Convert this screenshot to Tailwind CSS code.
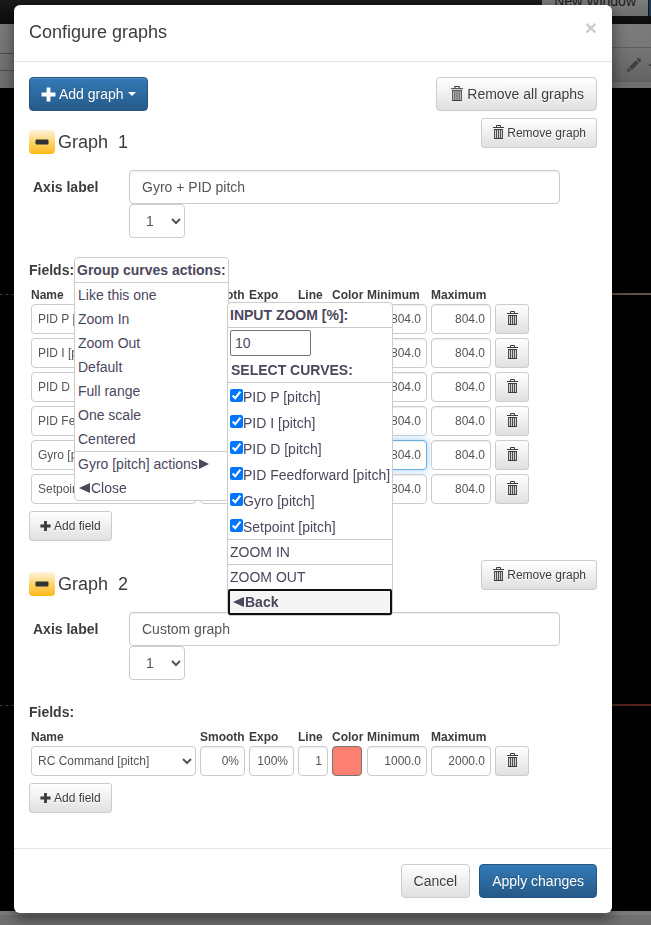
<!DOCTYPE html>
<html lang="en">
<head>
<meta charset="utf-8">
<meta name="viewport" content="width=device-width, initial-scale=1">
<title>Configure graphs</title>
<script src="https://cdn.jsdelivr.net/npm/@tailwindcss/browser@4"></script>
</head>
<body class="min-h-screen bg-black font-['Liberation_Sans',Arial,sans-serif] text-sm leading-5 text-[#3c3c3c]">

<svg class="hidden" aria-hidden="true">
  <symbol id="trash" viewBox="0 0 11 14">
    <path d="M3.500 2V.5h4V2" fill="none" stroke="currentColor" stroke-width="1"/>
    <path d="M0 2h11v1H0z" fill="currentColor"/>
    <path d="M1 4h9v9H1z" fill="currentColor" fill-opacity=".15"/>
    <path d="M1.500 4v9M3.500 5v8M5.500 5v8M7.500 5v8M9.500 4v9" stroke="currentColor" stroke-width=".9"/>
    <path d="M1 13.500h9M1 4.500h9" stroke="currentColor" stroke-width="1"/>
  </symbol>
  <symbol id="plus" viewBox="0 0 14 14">
    <path d="M5.200 .5h3.600v4.700H13.500v3.600H8.800V13.500H5.200V8.800H.5V5.200h4.700z" fill="currentColor"/>
  </symbol>
  <symbol id="minus" viewBox="0 0 14 6">
    <path d="M1.500 .5h11a1 1 0 0 1 1 1v3a1 1 0 0 1-1 1h-11a1 1 0 0 1-1-1v-3a1 1 0 0 1 1-1z" fill="currentColor"/>
  </symbol>
</svg>

<!-- Dimmed application behind the dialog -->
<div class="fixed inset-0 flex flex-col overflow-hidden bg-black" aria-hidden="true">
  <div class="flex h-6 items-start justify-end gap-px bg-gradient-to-b from-[#1b1b1b] to-[#0c0c0c]">
    <div class="flex h-4 items-start bg-gradient-to-b from-[#7c7c7c] to-[#6e6e6e] px-3 text-sm leading-[2px] text-[#1a1a1a]">New Window</div>
    <div class="h-4 w-[2px] bg-[#163a58]"></div>
  </div>
  <div class="flex h-16 justify-between bg-gradient-to-b from-[#7c7c7c] to-[#6e6e6e]">
    <div class="flex w-[14px] flex-col pt-[29px]">
      <div class="h-[18px] border-y border-[#4f4f4f]"></div>
    </div>
    <div class="flex w-[39px] flex-col pt-[23px]">
      <div class="flex h-[35px] items-center justify-between border-y border-[#5c5c5c] bg-gradient-to-b from-[#757575] to-[#636363] pl-[14px]">
        <svg class="h-4 w-4 text-[#404040]" viewBox="0 0 16 16"><path d="M1 15l1.200-4.200 3 3zM3 10l6.800-6.800 3 3L6 13zM10.600 2.400l1.200-1.200a1 1 0 0 1 1.400 0l1.600 1.600a1 1 0 0 1 0 1.400l-1.200 1.200z" fill="currentColor"/></svg>
        <div class="h-[2px] w-[2px] bg-[#444]"></div>
      </div>
    </div>
  </div>
  <div class="flex flex-1 flex-col">
    <div class="flex h-[207px] items-end justify-between">
      <div class="w-[14px] border-t border-dashed border-[#3a3a3a]"></div>
      <div class="w-[39px] border-t-2 border-[#5d523d]"></div>
    </div>
    <div class="flex h-[411px] items-end justify-between">
      <div class="w-[14px] border-t border-dashed border-[#3a3a3a]"></div>
      <div class="w-[39px] border-t-2 border-[#552420]"></div>
    </div>
  </div>
  <div class="h-[14px] border-t-4 border-[#7c7c7c] bg-[#707070]"></div>
</div>

<div role="dialog" aria-labelledby="title" class="relative mt-[5px] mr-[39px] ml-[14px] rounded-md bg-white shadow-[0_5px_15px_rgba(0,0,0,0.5)]">
  <header class="flex items-start justify-between border-b border-[#e5e5e5] px-[15px] pt-[14px] pb-4">
    <h4 id="title" class="text-lg leading-[26px]">Configure graphs</h4>
    <button type="button" aria-label="Close" class="text-[21px] leading-[18px] font-bold text-[#ccc]">×</button>
  </header>

  <main class="px-[15px] pt-[15px] pb-[35px]">
    <div class="flex justify-between">
      <button type="button" class="flex h-[34px] items-center rounded border border-[#245580] bg-gradient-to-b from-[#337ab7] to-[#265a88] px-[11px] text-white shadow-[inset_0_1px_0_rgba(255,255,255,0.15)] text-shadow-[0_-1px_0_rgba(0,0,0,0.2)]">
        <svg class="mr-[3px] h-[15px] w-[15px]"><use href="#plus"/></svg>Add graph
        <span class="ml-1 border-x-4 border-t-4 border-x-transparent border-t-white"></span>
      </button>
      <button type="button" class="flex h-[34px] items-center rounded border border-[#ccc] bg-gradient-to-b from-white to-[#e0e0e0] px-3 text-shadow-[0_1px_0_#fff]">
        <svg class="mr-1 mb-[2px] ml-[2px] h-[15px] w-3"><use href="#trash"/></svg>Remove all graphs
      </button>
    </div>
    <div id="graphs" class="flex flex-col gap-[19px] pt-[7px]"></div>
  </main>

  <footer class="flex justify-end gap-[9px] border-t border-[#e5e5e5] p-[15px]">
    <button type="button" class="h-[34px] rounded border border-[#ccc] bg-gradient-to-b from-white to-[#e0e0e0] px-3 text-shadow-[0_1px_0_#fff]">Cancel</button>
    <button type="button" class="h-[34px] rounded border border-[#245580] bg-gradient-to-b from-[#337ab7] to-[#265a88] px-3 text-white text-shadow-[0_-1px_0_rgba(0,0,0,0.2)]">Apply changes</button>
  </footer>

  <!-- Curve actions menu -->
  <div role="menu" class="absolute top-[252px] left-[60px] flex w-[155px] flex-col rounded border border-[#ccc] bg-white text-left leading-6 whitespace-nowrap text-[#4c475c]">
    <div class="border-b border-[#ccc] pl-[2px] font-bold">Group curves actions:</div>
    <button type="button" role="menuitem" class="pl-[3px] text-left">Like this one</button>
    <button type="button" role="menuitem" class="pl-[3px] text-left">Zoom In</button>
    <button type="button" role="menuitem" class="pl-[3px] text-left">Zoom Out</button>
    <button type="button" role="menuitem" class="pl-[3px] text-left">Default</button>
    <button type="button" role="menuitem" class="pl-[3px] text-left">Full range</button>
    <button type="button" role="menuitem" class="pl-[3px] text-left">One scale</button>
    <button type="button" role="menuitem" class="pl-[3px] text-left">Centered</button>
    <button type="button" role="menuitem" class="flex items-center gap-px border-t border-[#ccc] pl-[3px]">Gyro [pitch] actions<svg class="h-[10px] w-[10px]" viewBox="0 0 10 10"><path d="M0 0L10 5 0 10z" fill="currentColor"/></svg></button>
    <button type="button" role="menuitem" class="flex items-center gap-px pl-1"><svg class="h-[10px] w-[11px]" viewBox="0 0 11 10"><path d="M11 0L0 5l11 5z" fill="currentColor"/></svg>Close</button>
  </div>

  <!-- Zoom submenu -->
  <div role="menu" class="absolute top-[297px] left-[213px] flex w-[166px] flex-col rounded border border-[#ccc] bg-white leading-6 whitespace-nowrap text-[#4c475c]">
    <label for="zoom" class="border-b border-[#ccc] pl-[2px] font-bold">INPUT ZOOM [%]:</label>
    <input id="zoom" value="10" class="mx-[2px] my-[2px] h-[26px] w-[81px] rounded-xs border border-[#767676] px-1">
    <div class="border-b border-[#ccc] pl-[3px] font-bold">SELECT CURVES:</div>
    <div id="curves"></div>
    <button type="button" role="menuitem" class="border-t border-[#ccc] pl-[2px] text-left">ZOOM IN</button>
    <button type="button" role="menuitem" class="border-t border-[#ccc] pl-[2px] text-left">ZOOM OUT</button>
    <button type="button" role="menuitem" class="flex h-[26px] items-center gap-px rounded-xs border-2 border-[#101010] bg-[#f5f5f5] pl-[3px] font-bold"><svg class="h-[10px] w-[11px]" viewBox="0 0 11 10"><path d="M11 0L0 5l11 5z" fill="currentColor"/></svg>Back</button>
  </div>
</div>

<script>
const curves = ['PID P [pitch]', 'PID I [pitch]', 'PID D [pitch]', 'PID Feedforward [pitch]', 'Gyro [pitch]', 'Setpoint [pitch]'];
const colors = ['#fb8072', '#8dd3c7', '#ffffb3', '#bebada', '#80b1d3', '#fdb462'];
const graphs = [
  { label: 'Gyro + PID pitch', fields: curves.map((name, i) => ({ name, color: colors[i], min: '-804.0', max: '804.0', focus: i === 4 })) },
  { label: 'Custom graph', fields: [{ name: 'RC Command [pitch]', color: '#fb8072', min: '1000.0', max: '2000.0' }] },
];

const box = 'block h-[30px] w-full rounded border border-[#ccc] bg-white pr-[5px] text-right text-xs text-[#555] shadow-[inset_0_1px_1px_rgba(0,0,0,0.075)]';
const focused = 'block h-[30px] w-full rounded border border-[#66afe9] bg-white pr-[5px] text-right text-xs text-[#555] shadow-[inset_0_1px_1px_rgba(0,0,0,0.075),0_0_8px_rgba(102,175,233,0.6)]';
const smallButton = 'flex h-[30px] items-center rounded-[3px] border border-[#ccc] bg-gradient-to-b from-white to-[#e0e0e0] px-[10px] text-xs text-shadow-[0_1px_0_#fff]';

const row = f => `<tr>
  <td class="px-[2px] pb-1"><select aria-label="Name" class="block h-[30px] w-full rounded border border-[#ccc] bg-white px-[2px] text-xs text-[#555]"><option>${f.name}</option></select></td>
  <td class="px-[2px] pb-1"><input aria-label="Smooth" class="${box}" value="0%"></td>
  <td class="px-[2px] pb-1"><input aria-label="Expo" class="${box}" value="100%"></td>
  <td class="px-[2px] pb-1"><input aria-label="Line" class="${box}" value="1"></td>
  <td class="px-[2px] pb-1"><button type="button" aria-label="Color" class="block h-[30px] w-[30px] rounded border border-[#767676]" style="background:${f.color}"></button></td>
  <td class="px-[2px] pb-1"><input aria-label="Minimum" class="${f.focus ? focused : box}" value="${f.min}"></td>
  <td class="px-[2px] pb-1"><input aria-label="Maximum" class="${box}" value="${f.max}"></td>
  <td class="px-[2px] pb-1"><button type="button" aria-label="Remove field" class="${smallButton}"><svg class="mb-[2px] ml-px h-[14px] w-[11px]"><use href="#trash"/></svg></button></td>
</tr>`;

document.getElementById('graphs').innerHTML = graphs.map((g, i) => `<section>
  <div class="flex h-[52px] items-start justify-between">
    <div class="flex items-center gap-[3px] pt-[11px]">
      <button type="button" aria-label="Collapse" class="flex h-6 w-[26px] items-center justify-center rounded bg-gradient-to-b from-[#fff3dc] via-[#fdd567] to-[#ffb700] text-[#333]"><svg class="h-[6px] w-[14px]"><use href="#minus"/></svg></button>
      <h4 class="text-lg leading-[26px]">Graph&nbsp; ${i + 1}</h4>
    </div>
    <button type="button" class="${smallButton}"><svg class="mr-[3px] mb-[2px] ml-px h-[14px] w-[11px]"><use href="#trash"/></svg>Remove graph</button>
  </div>
  <div class="flex pr-[37px]">
    <label for="axis${i}" class="w-[100px] pt-[7px] pl-1 font-bold">Axis label</label>
    <div class="flex-1">
      <input id="axis${i}" value="${g.label}" class="block h-[34px] w-full rounded border border-[#ccc] bg-white px-3 text-[#555] shadow-[inset_0_1px_1px_rgba(0,0,0,0.075)]">
      <select aria-label="Axis height" class="block h-[34px] w-14 rounded border border-[#ccc] bg-white pl-3 text-[#555]"><option>1</option><option>2</option></select>
    </div>
  </div>
  <div class="pt-[22px] pb-[6px] font-bold">Fields:</div>
  <table class="w-[502px] table-fixed border-collapse text-xs">
    <colgroup><col class="w-[169px]"><col class="w-[49px]"><col class="w-[49px]"><col class="w-[34px]"><col class="w-[35px]"><col class="w-[64px]"><col class="w-[64px]"><col class="w-[38px]"></colgroup>
    <thead><tr class="h-[18px] text-left leading-[18px] whitespace-nowrap"><th class="px-[2px]">Name</th><th class="px-[2px]">Smooth</th><th class="px-[2px]">Expo</th><th class="px-[2px]">Line</th><th class="px-[2px]">Color</th><th class="px-[2px]">Minimum</th><th class="px-[2px]">Maximum</th><th></th></tr></thead>
    <tbody>${g.fields.map(row).join('')}</tbody>
  </table>
  <div class="pt-[3px]"><button type="button" class="${smallButton}"><svg class="mr-[3px] h-3 w-[11px]"><use href="#plus"/></svg>Add field</button></div>
</section>`).join('');

document.getElementById('curves').innerHTML = curves.map(name => `<label class="flex h-[26px] items-center pt-[2px] pl-[2px]"><input type="checkbox" checked class="mb-[3px] h-[13px] w-[13px] accent-[#0075ff]">${name}</label>`).join('');
</script>
</body>
</html>
